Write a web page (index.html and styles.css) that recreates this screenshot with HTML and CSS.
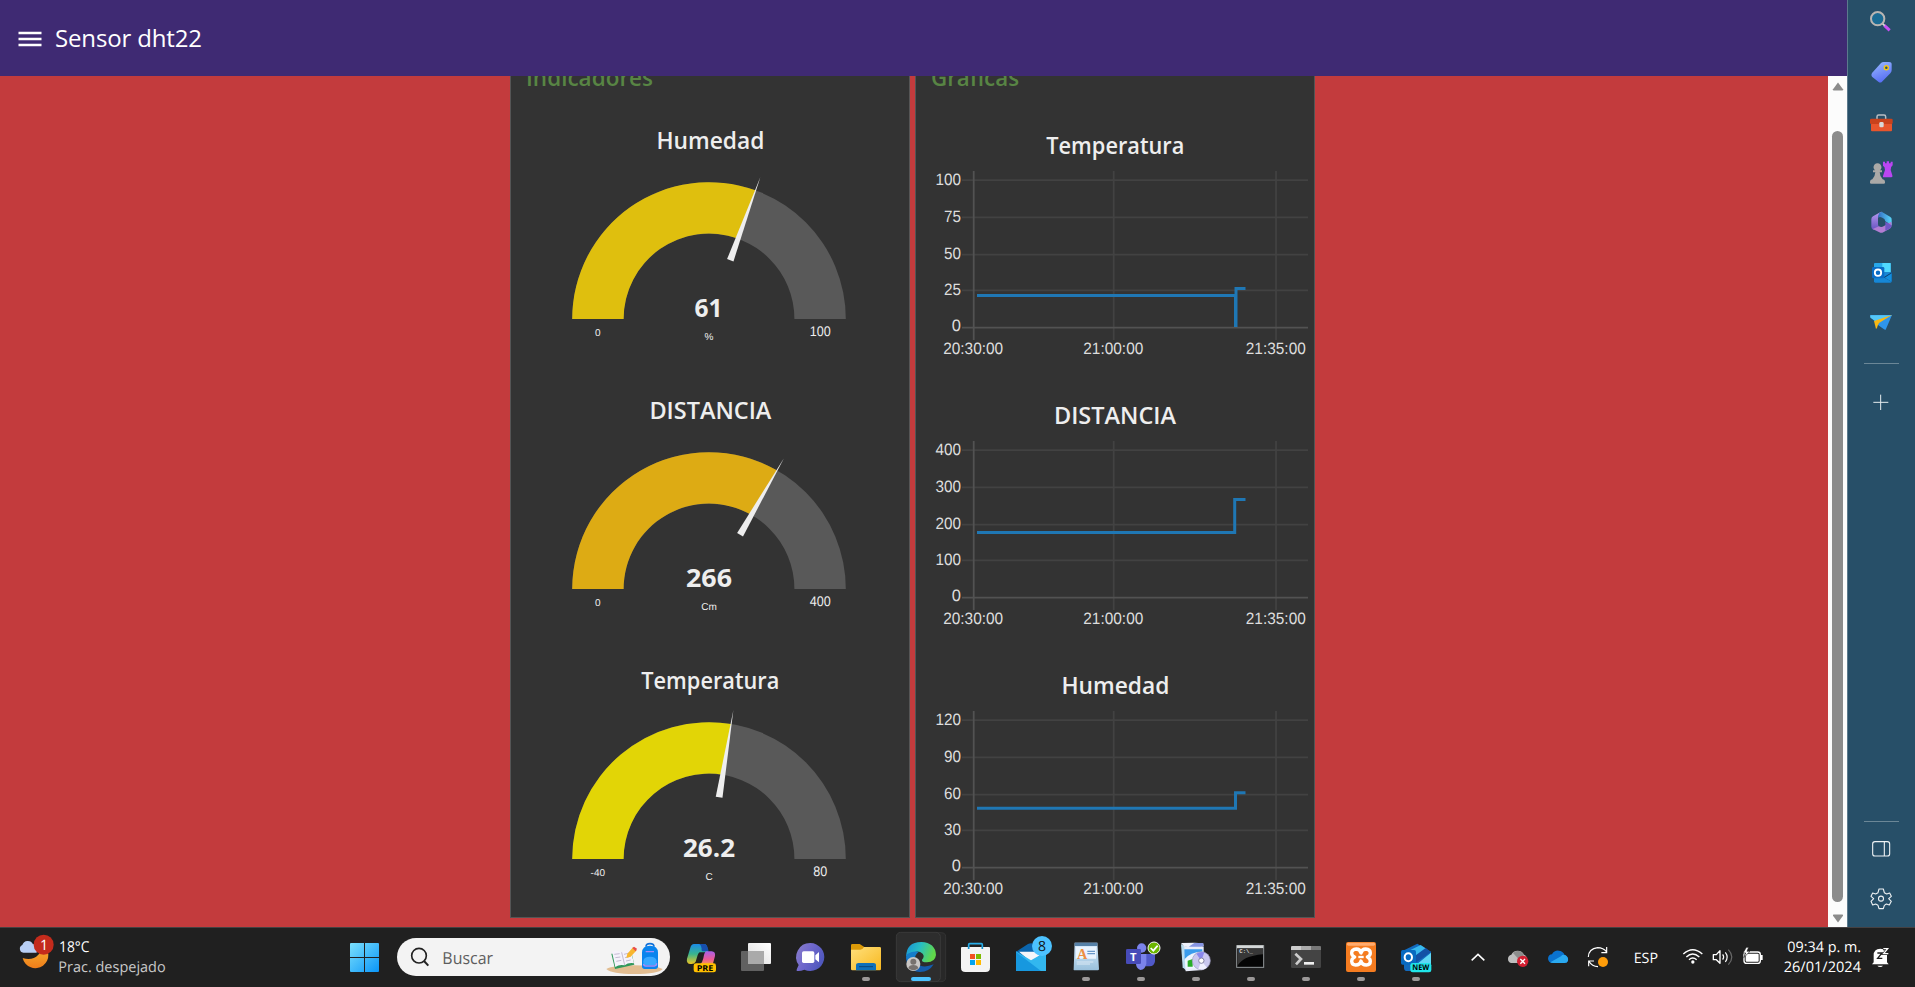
FILE: index.html
```html
<!DOCTYPE html>
<html lang="es">
<head>
<meta charset="utf-8">
<title>Sensor dht22</title>
<link rel="stylesheet" href="styles.css">
<script src="labels.js" defer></script>
</head>
<body>
<div class="browser">
  <div class="page">
    <header class="toolbar">
      <svg class="menu-icon" width="24" height="18" viewBox="0 0 24 18"><path d="M.5 3h23M.5 9h23M.5 15h23" stroke="#fff" stroke-width="2.3"/></svg>
      <h1 class="toolbar-title">Sensor dht22</h1>
    </header>
    <div class="viewport">
      <main class="dashboard">
        <section class="card">
          <h2 class="card-title"><svg width="398" height="31" viewBox="0 0 398 31"><text x="15" y="9.7" textLength="127">Indicadores</text></svg></h2>
          <svg class="gauge" width="398" height="270" viewBox="0 0 398 270">
            <text class="widget-title" x="199.4" y="41.7" textLength="108">Humedad</text>
            <path class="gauge-track" d="M61.2 212A136.8 136.8 0 0 1 334.8 212H283.4A85.4 85.4 0 0 0 112.6 212Z"/>
            <path fill="#dfbf0e" d="M61.2 212A136.8 136.8 0 0 1 244.3 83.3L226.9 131.6A85.4 85.4 0 0 0 112.6 212Z"/>
            <path class="needle" d="M198 61L201.4 149.5H194.6Z" transform="rotate(19.9 198 212)"/>
            <text class="value" x="197.4" y="209.7" textLength="28">61</text>
            <text class="unit" x="198" y="233">%</text>
            <text class="unit" x="86.8" y="229">0</text>
            <text class="max" x="309.2" y="229" textLength="21">100</text>
          </svg>
          <svg class="gauge" width="398" height="270" viewBox="0 0 398 270">
            <text class="widget-title" x="199.4" y="42" textLength="122">DISTANCIA</text>
            <path class="gauge-track" d="M61.2 212A136.8 136.8 0 0 1 334.8 212H283.4A85.4 85.4 0 0 0 112.6 212Z"/>
            <path fill="#ddab14" d="M61.2 212A136.8 136.8 0 0 1 265.8 93.2L240.3 137.8A85.4 85.4 0 0 0 112.6 212Z"/>
            <path class="needle" d="M198 61L201.4 149.5H194.6Z" transform="rotate(29.8 198 212)"/>
            <text class="value" x="198" y="209.7" textLength="46">266</text>
            <text class="unit" x="198" y="233">Cm</text>
            <text class="unit" x="86.8" y="229">0</text>
            <text class="max" x="309.2" y="229" textLength="21">400</text>
          </svg>
          <svg class="gauge" width="398" height="270" viewBox="0 0 398 270">
            <text class="widget-title" x="199.3" y="42" textLength="138">Temperatura</text>
            <path class="gauge-track" d="M61.2 212A136.8 136.8 0 0 1 334.8 212H283.4A85.4 85.4 0 0 0 112.6 212Z"/>
            <path fill="#e2d506" d="M61.2 212A136.8 136.8 0 0 1 220.1 77L211.8 127.7A85.4 85.4 0 0 0 112.6 212Z"/>
            <path class="needle" d="M198 61L201.4 149.5H194.6Z" transform="rotate(9.3 198 212)"/>
            <text class="value" x="198" y="209.7" textLength="52">26.2</text>
            <text class="unit" x="198" y="233">C</text>
            <text class="unit" x="86.8" y="229">-40</text>
            <text class="max" x="309.2" y="229" textLength="14">80</text>
          </svg>
        </section>
        <section class="card">
          <h2 class="card-title"><svg width="398" height="31" viewBox="0 0 398 31"><text x="15" y="9.7" textLength="88">Gráficas</text></svg></h2>
          <svg class="chart" width="398" height="270" viewBox="0 0 398 270">
            <text class="widget-title" x="199.3" y="47" textLength="138">Temperatura</text>
            <path class="grid" d="M46 73.2H392M46 110.3H392M46 147.6H392M46 183.3H392M197.7 64V233M360 64V233"/><path class="axis" d="M57.7 64V233M46 220.6H392"/>
            <g class="ylabels"><text x="45" y="77.7" textLength="25.5">100</text><text x="45" y="114.7" textLength="17">75</text><text x="45" y="152" textLength="17">50</text><text x="45" y="188" textLength="17">25</text><text x="45" y="224">0</text></g>
            <g class="xlabels"><text x="57.2" y="247" textLength="60">20:30:00</text><text x="197.3" y="247" textLength="60">21:00:00</text><text x="359.8" y="247" textLength="60">21:35:00</text></g>
            <path class="series" d="M61 188.4H320V220V181.4H329.5"/><path class="series" d="M319.5 189V220"/>
          </svg>
          <svg class="chart" width="398" height="270" viewBox="0 0 398 270">
            <text class="widget-title" x="199" y="47" textLength="122">DISTANCIA</text>
            <path class="grid" d="M46 73.2H392M46 110.3H392M46 147.6H392M46 183.3H392M197.7 64V233M360 64V233"/><path class="axis" d="M57.7 64V233M46 220.6H392"/>
            <g class="ylabels"><text x="45" y="77.7" textLength="25.5">400</text><text x="45" y="114.7" textLength="25.5">300</text><text x="45" y="152" textLength="25.5">200</text><text x="45" y="188" textLength="25.5">100</text><text x="45" y="224">0</text></g>
            <g class="xlabels"><text x="57.2" y="247" textLength="60">20:30:00</text><text x="197.3" y="247" textLength="60">21:00:00</text><text x="359.8" y="247" textLength="60">21:35:00</text></g>
            <path class="series" d="M61 155.5H318.7V122.5H329.5"/>
          </svg>
          <svg class="chart" width="398" height="270" viewBox="0 0 398 270">
            <text class="widget-title" x="199.4" y="46.7" textLength="108">Humedad</text>
            <path class="grid" d="M46 73.2H392M46 110.3H392M46 147.6H392M46 183.3H392M197.7 64V233M360 64V233"/><path class="axis" d="M57.7 64V233M46 220.6H392"/>
            <g class="ylabels"><text x="45" y="77.7" textLength="25.5">120</text><text x="45" y="114.7" textLength="17">90</text><text x="45" y="152" textLength="17">60</text><text x="45" y="188" textLength="17">30</text><text x="45" y="224">0</text></g>
            <g class="xlabels"><text x="57.2" y="247" textLength="60">20:30:00</text><text x="197.3" y="247" textLength="60">21:00:00</text><text x="359.8" y="247" textLength="60">21:35:00</text></g>
            <path class="series" d="M61 161.3H319.5V145.7H329.5"/>
          </svg>
        </section>
      </main>
      <div class="scrollbar">
        <svg width="12" height="9" viewBox="0 0 12 9"><path d="M6 .5L11 7.3Q11.5 8.5 10 8.5H2Q.5 8.5 1 7.3Z" fill="#8b8b8b"/></svg>
        <div class="thumb"></div>
        <svg width="12" height="9" viewBox="0 0 12 9"><path d="M6 8.5L11 1.7Q11.5.5 10 .5H2Q.5.5 1 1.7Z" fill="#8b8b8b"/></svg>
      </div>
    </div>
  </div>

  <aside class="sidebar">
    <svg width="67" height="47" viewBox="114 0 201 141"><path d="M223 76L239 91" stroke="#c850f5" stroke-width="9"/><path d="M217 70L224 77" stroke="#ddd" stroke-width="5"/><circle cx="203" cy="56" r="20" fill="#1b6b94" stroke="#b9b5b2" stroke-width="6"/></svg>
    <svg width="67" height="50" viewBox="114 141 201 150"><defs><linearGradient id="tag" x1="0" y1="0" x2="0.4" y2="1"><stop stop-color="#9bbcff"/><stop offset="1" stop-color="#5970f5"/></linearGradient></defs><path d="M213 189Q216 186 221 186H237Q245 186 245 193V210Q245 216 241 220L216 245Q211 250 206 246L186 230Q182 225 186 219Z" fill="url(#tag)"/><circle cx="229" cy="203" r="6" fill="#274f68" stroke="#f3c515" stroke-width="4.5"/></svg>
    <svg width="67" height="50" viewBox="114 291 201 150"><path d="M201 357V350Q201 345 206 345H222Q227 345 227 350V357" fill="none" stroke="#b9bec3" stroke-width="4.5"/><rect x="183" y="370" width="63" height="24" rx="3" fill="#e8552c"/><rect x="180" y="356" width="68" height="16" rx="4" fill="#c9421c"/><rect x="208" y="366" width="13" height="16" rx="4" fill="#d8d8d8"/></svg>
    <svg width="67" height="50" viewBox="114 441 201 150"><path d="M219 485H225V490H230V484H237V490H242V485H248V496Q242 500 242 510L247 526Q249 532 244 532H222Q217 532 220 525L225 510Q225 500 219 497Z" fill="#b946f2"/><path d="M180 545Q180 539 187 538Q195 530 196 517H189V511H195A12 12 0 1 1 210 511H216V517H209Q210 531 218 538Q225 539 225 545V548Q225 551 221 551H184Q180 551 180 548Z" fill="#aaa9a7"/></svg>
    <svg width="67" height="50" viewBox="114 591 201 150"><defs><linearGradient id="m1" y2="1" x2="0"><stop stop-color="#b99af0"/><stop offset="1" stop-color="#6752c0"/></linearGradient><linearGradient id="m2"><stop stop-color="#3470c4"/><stop offset="1" stop-color="#5ad7fa"/></linearGradient></defs><path d="M212 636L189 649Q184 652 184 658V680Q184 686 190 690L207 680Q204 677 204 672V655Q204 642 217 635Z" fill="url(#m1)"/><path d="M205 654Q204 635 216 636L240 650Q246 653 245 660V676L226 664Q225 655 217 653Q208 649 205 654Z" fill="url(#m2)"/><path d="M188 687L207 679Q214 684 222 678L244 665Q247 682 239 686L220 697Q214 700 208 697Z" fill="#b27dd2"/><path d="M226 665L245 676Q245 683 239 686L226 692Z" fill="#7058c6"/></svg>
    <svg width="67" height="50" viewBox="114 741 201 150"><path d="M192 791Q192 789 195 789H239Q242 789 242 792V817H192Z" fill="#28a8ea"/><path d="M217 789H242V817H217Z" fill="#50d9ff"/><path d="M192 817H245V844Q245 848 241 848H196Q192 848 192 844Z" fill="#1687d6"/><path d="M221 832L245 817V845Z" fill="#103f6d"/><path d="M224 833L245 820V845Z" fill="#1490df"/><rect x="186" y="801" width="37" height="34" rx="4" fill="#0a6cc5"/><circle cx="204" cy="818" r="9.5" fill="none" stroke="#fff" stroke-width="5.5"/></svg>
    <svg width="67" height="50" viewBox="114 891 201 150"><path d="M180 949Q180 945 184 945H246L227 989Q224 990 221 987L205 976Z" fill="#2e95eb"/><path d="M181 946H246L199 965L181 953Z" fill="#55c8f7"/><path d="M246 945L192 963L198 987Q201 987 203 977L207 969Z" fill="#f9b812"/></svg>
    <div class="side-line"></div>
    <svg class="side-add" width="67" height="50" viewBox="114 1132 201 150"><path d="M190 1208H235M212 1185V1231" stroke="#e5ecef" stroke-width="3"/></svg>
    <div class="side-line side-line-bottom"></div>
    <svg class="side-panel" width="67" height="50" viewBox="114 134 201 150"><rect x="188" y="187" width="51" height="43" rx="7" fill="none" stroke="#eef2f4" stroke-width="3.3"/><path d="M223 187V230" stroke="#eef2f4" stroke-width="3.3"/></svg>
    <svg width="67" height="50" viewBox="114 284 201 150"><path d="M207 329H220L223 340L230 344L239 341L244 351L236 358L244 366L238 377L229 374L223 378L220 388H207L204 378L197 374L188 377L183 366L191 358L183 351L188 341L197 344L204 340Z" fill="none" stroke="#eef2f4" stroke-width="3.3" stroke-linejoin="round"/><circle cx="213" cy="358" r="7.5" fill="none" stroke="#eef2f4" stroke-width="3.3"/></svg>
  </aside>
</div>

<footer class="taskbar">
  <svg width="339" height="60" viewBox="0 21 1017 180"><defs><linearGradient id="moon" x2="0" y2="1"><stop stop-color="#f7b733"/><stop offset="1" stop-color="#ef7d1a"/></linearGradient></defs>
    <path d="M126 72A39 39 0 1 1 68 114Q97 123 115 104Q130 90 126 72Z" fill="url(#moon)"/><path d="M70 98A12 12 0 0 1 67 75A17 17 0 0 1 99 73A13 13 0 0 1 108 98Z" fill="#b8cff5"/><circle cx="131" cy="74" r="30" fill="#c42b1c"/><text class="t white" x="120" y="90" font-size="43">1</text>
    <text class="t white" x="177" y="96" font-size="45" textLength="91">18°C</text><text class="t dim" x="175" y="156" font-size="44" textLength="322">Prac. despejado</text></svg>
  <svg width="55" height="60" viewBox="1017 21 165 180"><defs><linearGradient id="win" x2="1" y2="1" gradientUnits="objectBoundingBox"><stop stop-color="#7be0fc"/><stop offset="1" stop-color="#0a95f8"/></linearGradient></defs><path d="M1050 72Q1050 69 1053 69H1092V111H1050ZM1095 69H1134Q1137 69 1137 72V111H1095ZM1050 114H1092V156H1053Q1050 156 1050 153ZM1095 114H1137V153Q1137 156 1134 156H1095Z" fill="url(#win)"/></svg>
  <div class="search">
    <svg width="273" height="38" viewBox="51 54 819 114"><circle cx="117" cy="107" r="22" fill="none" stroke="#222" stroke-width="5"/><path d="M132 123L145 137" stroke="#222" stroke-width="6"/><text class="t" x="187" y="132" font-size="50" textLength="152" fill="#5d5d5d">Buscar</text>
    <path d="M679 147Q700 136 763 136Q825 136 848 147Q835 162 763 162Q695 162 679 147Z" fill="#e2bd91"/><path d="M694 101L754 96L763 134L705 147Z" fill="#31985c"/><path d="M696 95Q711 89 725 97Q739 88 752 92L762 130Q745 127 734 136Q718 132 706 141Z" fill="#f5f2fb"/><path d="M725 97L734 135M703 103L719 101M706 113L721 111M709 124L724 121M732 103L748 99M735 113L751 109M738 123L752 120" stroke="#b9b0c9" stroke-width="2.5"/><path d="M739 114L742 101L759 82L770 91L752 110Z" fill="#f8b62e"/><path d="M757 84L762 80L771 86L767 94Z" fill="#e94b4b"/><path d="M798 80Q798 71 810 71Q822 71 822 80" fill="none" stroke="#1372d9" stroke-width="5"/><path d="M786 139V98Q786 77 810 77Q834 77 834 98V139Q834 147 826 147H794Q786 147 786 139Z" fill="#0a84ed"/><path d="M790 135V124Q790 110 810 110Q830 110 830 124V135Z" fill="#39a8ff"/><path d="M797 95H822M791 132Q791 138 797 138H823Q830 138 830 130" fill="none" stroke="#a68cf5" stroke-width="4"/></svg>
  </div>
  <svg width="55" height="60" viewBox="879 21 165 180"><defs><linearGradient id="c1" x2="0" y2="1"><stop stop-color="#1a8be8"/><stop offset=".5" stop-color="#39b48e"/><stop offset="1" stop-color="#f0c520"/></linearGradient><linearGradient id="c2" x2="0" y2="1"><stop stop-color="#a95fe8"/><stop offset=".6" stop-color="#ec5a94"/><stop offset="1" stop-color="#f79d52"/></linearGradient></defs><path d="M942 72H973Q980 73 982 84L985 97H960Q955 97 951 112L947 125Q943 133 932 132Q918 131 921 116L931 83Q934 72 942 72Z" fill="url(#c1)"/><path d="M958 72H974Q981 73 984 86L986 94H971Q963 94 965 86Q964 76 958 72Z" fill="#164fae"/><path d="M979 94H995Q1007 95 1005 108L998 134H960Q968 126 970 115Q973 95 979 94Z" fill="url(#c2)"/><rect x="941" y="130" width="67" height="27" rx="7" fill="#ffc000"/><text class="t" x="950" y="152" font-size="24" font-weight="700" textLength="50">PRE</text></svg>
  <svg width="55" height="60" viewBox="1044 21 165 180"><defs><linearGradient id="tv" x1="1" x2="0" y2="1"><stop stop-color="#fff"/><stop offset="1" stop-color="#dcdcdc"/></linearGradient></defs><rect x="1104" y="69" width="69" height="63" rx="3" fill="url(#tv)"/><rect x="1083" y="93" width="69" height="60" rx="3" fill="#6d6d6d" fill-opacity=".85"/><rect x="1104" y="93" width="48" height="39" fill="#aaa"/></svg>
  <svg width="55" height="60" viewBox="1209 21 165 180"><defs><linearGradient id="ch" x2="1" y2=".5"><stop stop-color="#8b7fca"/><stop offset=".5" stop-color="#7068cc"/><stop offset="1" stop-color="#5058be"/></linearGradient></defs><path d="M1291 69A42 42 0 1 1 1273 149Q1262 154 1251 153Q1248 151 1251 146L1256 135A42 42 0 0 1 1291 69Z" fill="url(#ch)"/><rect x="1266" y="94" width="37" height="35" rx="5" fill="#fff"/><path d="M1306 106L1317 96V127L1306 118Z" fill="#fff"/></svg>
  <svg width="55" height="60" viewBox="24 21 165 180"><defs><linearGradient id="fo" x2="1" y2="1"><stop stop-color="#ffe07c"/><stop offset="1" stop-color="#f8b81f"/></linearGradient></defs><path d="M63 76Q63 72 67 72H89L103 81H150V96H63Z" fill="#dc9a08"/><path d="M63 89H91Q98 89 102 81H149Q153 81 153 85V147Q153 151 149 151H67Q63 151 63 147Z" fill="url(#fo)"/><path d="M78 151V136Q78 129 86 129H130Q138 129 138 136V151Z" fill="#0f70bb"/><path d="M87 140H129" stroke="#0b477c" stroke-width="3"/><rect class="dot" x="96" y="171" width="24" height="12" rx="6"/></svg>
  <svg width="55" height="60" viewBox="189 21 165 180"><defs><linearGradient id="ed" x2="1" y2=".3"><stop stop-color="#178fd7"/><stop offset=".5" stop-color="#28bec2"/><stop offset="1" stop-color="#61d84a"/></linearGradient></defs><path d="M320 38H333Q347 38 347 50V172Q347 185 333 185H320Z" fill="#282828" stroke="#3b3b3b" stroke-width="2"/><rect x="199" y="37" width="132" height="148" rx="13" fill="#2d2d2d" stroke="#3d3d3d" stroke-width="2.5"/><path d="M228 111Q229 66 274 66Q316 68 318 105Q315 127 291 127Q274 127 276 119Q285 109 278 101Q265 89 247 99Q232 104 228 111Z" fill="url(#ed)"/><path d="M228 111Q240 93 259 99Q248 111 260 128Q276 148 311 133Q297 157 268 156Q229 151 228 111Z" fill="#145cac"/><path d="M229 105Q243 92 266 95Q252 106 256 121L239 133Q227 124 229 105Z" fill="#147cc9"/><circle cx="250" cy="132" r="21" fill="#c9c6c4"/><circle cx="250" cy="125" r="9" fill="#77716e"/><path d="M235 145Q237 135 250 135Q263 135 265 145Q251 157 235 145Z" fill="#77716e"/><rect x="243" y="171" width="60" height="12" rx="6" fill="#4cc2ff"/></svg>
  <svg width="55" height="60" viewBox="354 21 165 180"><path d="M416 87V74Q416 71 419 71H454Q457 71 457 74V87" fill="none" stroke="#28ade8" stroke-width="5"/><path d="M393 84Q393 81 396 81H477Q480 81 480 84V143Q480 156 467 156H406Q393 156 393 143Z" fill="#f3f3f3"/><path d="M416 80V87M457 80V87" stroke="#1490cc" stroke-width="5"/><path d="M420 102H435V117H420Z" fill="#f25022"/><path d="M438 102H453V117H438Z" fill="#7fba00"/><path d="M420 120H435V135H420Z" fill="#00a4ef"/><path d="M438 120H453V135H438Z" fill="#ffb900"/></svg>
  <svg width="55" height="60" viewBox="519 21 165 180"><path d="M558 95L594 72Q603 67 612 72L648 96V125H558Z" fill="#0b65ad"/><path d="M567 95H644L603 126Z" fill="#f5f6fa"/><path d="M558 94L603 121L648 95V153H558Z" fill="#32b7ef"/><path d="M558 96L633 153H558Z" fill="#1798df"/><circle cx="636" cy="78" r="30" fill="#4cc2ff"/><text class="t" x="624" y="93" font-size="42" fill="#111">8</text></svg>
  <svg width="55" height="60" viewBox="684 21 165 180"><defs><linearGradient id="wp" x2="0" y2="1"><stop stop-color="#d9edff"/><stop offset="1" stop-color="#99c0db"/></linearGradient></defs><path d="M734 68H802L807 147Q807 151 803 151H733Q730 151 731 147Z" fill="url(#wp)"/><path d="M734 68H802V78H734Z" fill="#5681a8"/><path d="M738 80H799L798 116H737Z" fill="#eaf4ff"/><text x="741" y="117" font-family="Liberation Serif" font-weight="700" font-size="43" fill="#ed8f43">A</text><path d="M772 94H795M772 101H795" stroke="#6a99ca" stroke-width="4"/><path d="M740 126H790M740 132H780" stroke="#dbe9f4" stroke-width="3"/><rect class="dot" x="756" y="171" width="24" height="12" rx="6"/></svg>
  <svg width="55" height="60" viewBox="849 21 165 180"><circle cx="935" cy="84" r="14" fill="#7b83eb"/><path d="M943 102H975V124Q973 140 957 139H947Z" fill="#5059c9"/><path d="M918 102H949V131Q946 149 931 150Q919 146 918 132Z" fill="#7b83eb"/><rect x="888" y="87" width="45" height="45" rx="4" fill="#474bb8"/><text class="t white" x="910" y="122" text-anchor="middle" font-size="34" font-weight="700">T</text><circle cx="972" cy="84" r="18" fill="#6bb700" stroke="#f8f8f8" stroke-width="3"/><path d="M962 84L970 92L983 77" fill="none" stroke="#fff" stroke-width="5"/><rect class="dot" x="921" y="171" width="24" height="12" rx="6"/></svg>
  <svg width="55" height="60" viewBox="114 21 165 180"><path d="M153 72L169 81V152L158 142Z" fill="#b9dcef"/><path d="M153 69L193 68L219 70L221 79L204 83L163 80Z" fill="#edf1fb"/><path d="M176 80L193 69H220L221 79L202 83Z" fill="#8795e2"/><path d="M163 80H221V150L167 154Z" fill="#e8ecf9"/><path d="M163 88H217V112L164 119Z" fill="#3a9cec"/><path d="M164 117Q181 96 216 95V143L167 146Z" fill="#ecf5ff"/><path d="M173 122L188 117V140H173Z" fill="#28ad28"/><circle cx="214" cy="122" r="27" fill="#c9c7ef" stroke="#9b99bd" stroke-width="2"/><path d="M214 122L199 101Q210 94 223 97Z" fill="#8a88ed"/><path d="M214 122L231 143Q222 151 205 147Z" fill="#f0f0ff"/><circle cx="214" cy="122" r="8" fill="#fff" stroke="#8182a3" stroke-width="3"/><rect class="dot" x="186" y="171" width="24" height="12" rx="6"/></svg>
  <svg width="55" height="60" viewBox="279 21 165 180"><rect x="320" y="77" width="81" height="65" fill="#050505" stroke="#94999b" stroke-width="3"/><path d="M321 76H400V85H321Z" fill="#d5d8d9"/><path d="M322 86H399V103Q337 108 322 139Z" fill="#373737"/><text x="328" y="98" font-family="Liberation Mono" font-weight="700" font-size="17" fill="#ddd">C:\_</text><rect class="dot" x="351" y="171" width="24" height="12" rx="6"/></svg>
  <svg width="55" height="60" viewBox="444 21 165 180"><rect x="483" y="78" width="90" height="66" rx="4" fill="#444"/><path d="M483 90V82Q483 78 487 78H513V90Z" fill="#ccc"/><path d="M513 78H543V90H513Z" fill="#aaa"/><path d="M543 78H569Q573 78 573 82V90H543Z" fill="#777"/><path d="M496 101L513 117L498 133" fill="none" stroke="#ccc" stroke-width="8"/><path d="M522 130H552" stroke="#f0f0f0" stroke-width="8"/><rect class="dot" x="516" y="171" width="24" height="12" rx="6"/></svg>
  <svg width="55" height="60" viewBox="609 21 165 180"><rect x="648" y="66" width="90" height="90" rx="6" fill="#f57c20"/><rect x="651" y="68" width="84" height="9" rx="4" fill="#ffac70"/><path d="M693 99Q690 87 679 87Q665 88 665 99Q665 107 674 111Q665 115 665 124Q666 135 677 135Q690 135 693 123Q696 135 709 135Q721 135 721 124Q721 115 712 111Q721 107 721 99Q721 88 707 87Q696 87 693 99Z" fill="none" stroke="#fff" stroke-width="10" stroke-linejoin="round"/><path d="M685 111H701" stroke="#fff" stroke-width="7"/><rect class="dot" x="681" y="171" width="24" height="12" rx="6"/></svg>
  <svg width="55" height="60" viewBox="774 21 165 180"><path d="M822 91L862 71L903 95V145Q903 153 895 153H832Q822 153 822 143Z" fill="#126abd"/><path d="M835 93L872 75L889 86L844 116Z" fill="#38b9ee"/><path d="M842 117L887 84L903 96L847 135Z" fill="#1351a5"/><path d="M854 138L903 98V145Q903 153 895 153H850Z" fill="#60d7f4"/><rect x="813" y="90" width="45" height="44" rx="5" fill="#086ac0"/><ellipse cx="835" cy="112" rx="11" ry="12" fill="none" stroke="#fff" stroke-width="6"/><rect x="841" y="129" width="63" height="28" rx="7" fill="#20e5e9"/><text class="t" x="847" y="151" font-size="23" font-weight="700" textLength="51">NEW</text><rect class="dot" x="846" y="171" width="24" height="12" rx="6"/></svg>

  <div class="tray">
    <svg width="40" height="60" viewBox="9 21 120 180"><path d="M50 121L69 103L88 121" fill="none" stroke="#fff" stroke-width="4.5"/></svg>
    <svg width="40" height="60" viewBox="129 21 120 180"><path d="M168 129A13 13 0 0 1 169 104A21 21 0 0 1 207 104Q219 108 216 129Z" fill="#bdbdbd"/><path d="M174 99A20 20 0 0 1 207 105L190 116Z" fill="#8c8c8c"/><circle cx="203" cy="124" r="17" fill="#d31f32"/><path d="M196 117L210 131M210 117L196 131" stroke="#fff" stroke-width="4"/></svg>
    <svg width="40" height="60" viewBox="249 21 120 180"><path d="M294 129Q279 129 279 115Q281 103 291 103A21 21 0 0 1 329 105Q341 110 339 122Q337 129 328 129Z" fill="#0a72ce"/><path d="M286 127L318 109Q323 102 332 106Q341 113 339 122Q337 129 328 129H294Q288 129 286 127Z" fill="#2aa9ef"/></svg>
    <svg width="40" height="60" viewBox="369 21 120 180"><path d="M400 111Q401 86 428 83Q445 83 455 96M455 81V98H439M401 139V123H417M402 124Q411 140 429 140" fill="none" stroke="#fff" stroke-width="3.5"/><circle cx="444" cy="126" r="15" fill="#ff9d0a"/></svg>
    <svg width="55" height="60" viewBox="489 21 165 180"><text class="t white" x="536" y="128" font-size="43" textLength="73">ESP</text></svg>
    <svg width="35" height="60" viewBox="654 21 105 180"><path d="M685 102Q713 76 742 102M694 111Q713 93 733 111M702 119Q713 109 725 119" fill="none" stroke="#fff" stroke-width="4.2"/><circle cx="713.500" cy="126" r="5" fill="#fff"/></svg>
    <svg width="30" height="60" viewBox="759 21 90 180"><path d="M775 104H784L795 92V130L784 119H775Z" fill="none" stroke="#fff" stroke-width="4" stroke-linejoin="round"/><path d="M803 103Q809 111 803 119M811 97Q822 111 811 126" fill="none" stroke="#fff" stroke-width="3.5"/><path d="M820 89Q841 111 820 134" fill="none" stroke="#696969" stroke-width="3.5"/></svg>
    <svg width="30" height="60" viewBox="849 21 90 180"><rect x="867" y="96" width="49" height="34" rx="8" fill="none" stroke="#fff" stroke-width="4"/><rect x="872" y="101" width="39" height="24" rx="3" fill="#fff"/><path d="M920 105V120" stroke="#fff" stroke-width="6"/><path d="M874 82L864 99H872L866 113L885 94H876L881 82Z" fill="#fff" stroke="#202020" stroke-width="2"/></svg>
    <svg width="97" height="60" viewBox="939 21 291 180"><text class="t white" x="997" y="96" font-size="44" textLength="221">09:34 p. m.</text><text class="t white" x="986" y="156" font-size="44" textLength="232">26/01/2024</text></svg>
    <svg width="30" height="60" viewBox="1230 21 90 180"><path d="M1256 127V106Q1256 86 1276 86Q1296 86 1296 106V127L1301 133H1251ZM1267 137H1284Q1281 141 1276 141Q1270 141 1267 137Z" fill="#fff"/><path d="M1267 99H1281L1268 115H1282" fill="none" stroke="#202020" stroke-width="4"/><path d="M1284 87H1298L1286 101H1300" fill="none" stroke="#202020" stroke-width="8"/><path d="M1285 86H1298L1286 101H1300" fill="none" stroke="#fff" stroke-width="4"/></svg>
  </div>
</footer>
</body>
</html>
```
FILE: styles.css
```css
* { box-sizing: border-box; }
body {
  margin: 0;
  width: 1915px;
  height: 987px;
  overflow: hidden;
  display: flex;
  flex-direction: column;
  background: #202020;
  font-family: "Open Sans", "Noto Sans", sans-serif;
}
svg { display: block; flex: none; }

.browser { display: flex; height: 927px; }
.page { flex: 1; display: flex; flex-direction: column; min-width: 0; }

.toolbar {
  height: 76px;
  flex: none;
  display: flex;
  align-items: center;
  gap: 13px;
  padding: 2px 18px 0;
  background: #3f2a73;
  color: #fff;
}
.toolbar-title {
  margin: 0;
  padding-bottom: 4px;
  font-size: 24px;
  font-weight: 400;
  letter-spacing: -0.15px;
}

.viewport { flex: 1; display: flex; min-height: 0; background: #c33b3d; }
.dashboard {
  flex: 1;
  display: flex;
  gap: 5px;
  align-items: flex-start;
  padding-left: 510px;
}
.card {
  width: 400px;
  background: #333;
  border: solid #555;
  border-width: 0 1px 1px;
}
.card-title { margin: 0; }
.card-title text { font-size: 23.5px; font-weight: 600; fill: #588544; }

.widget-title { font-size: 23.5px; font-weight: 600; fill: #eee; text-anchor: middle; }
.gauge-track { fill: #595959; }
.needle { fill: #eee; }
.value { font-size: 25px; font-weight: 700; fill: #eee; text-anchor: middle; }
.unit, .max, .xlabels, .ylabels { font-family: "Liberation Sans", Arial, sans-serif; }
.unit { font-size: 10px; fill: #eee; text-anchor: middle; }
.max { font-size: 14px; fill: #eee; text-anchor: middle; }
.unit, .max, .xlabels text, .ylabels text, .t { text-rendering: geometricPrecision; }
.xlabels, .ylabels { font-size: 16.5px; fill: #ddd; }
.xlabels { text-anchor: middle; }
.ylabels { text-anchor: end; }
.grid { stroke: #424242; stroke-width: 1.8; fill: none; }
.axis { stroke: #525252; stroke-width: 1.8; fill: none; }
.series { stroke: #1f77b4; stroke-width: 3; fill: none; }

.scrollbar {
  width: 19px;
  background: #fcfcfc;
  display: flex;
  flex-direction: column;
  align-items: center;
  padding: 6px 0 4px;
}
.thumb { width: 11px; flex: 1; margin: 40px 0 12px; border-radius: 6px; background: #8b8b8b; }

.sidebar {
  width: 68px;
  flex: none;
  display: flex;
  flex-direction: column;
  background: #274f68;
  border-left: 1px solid #5c7a8d;
}
.side-line { height: 1px; width: 35px; margin: 16px 0 0 16px; background: #6b8797; flex: none; }
.side-add { margin-top: 13px; }
.side-line-bottom { margin-top: 394px; }
.side-panel { margin-top: 2px; }

.taskbar {
  height: 60px;
  display: flex;
  align-items: center;
  background: #202020;
  box-shadow: inset 0 1px #454142;
}
.search {
  width: 273px;
  height: 38px;
  margin: 0 3px;
  border-radius: 19px;
  background: #f3f3f3;
  overflow: hidden;
}
.tray { display: flex; margin-left: 15px; }
.t { font-family: "Open Sans", "Noto Sans", sans-serif; }
.white { fill: #fff; }
.dim { fill: #c8c8c8; }
.dot { fill: #9b9898; }
```
FILE: labels.js
```js
// Fit each label to its width by scaling the glyphs rather than spacing them out.
document.querySelectorAll("text[textLength]").forEach(function (label) {
  label.setAttribute("lengthAdjust", "spacingAndGlyphs");
});
```
